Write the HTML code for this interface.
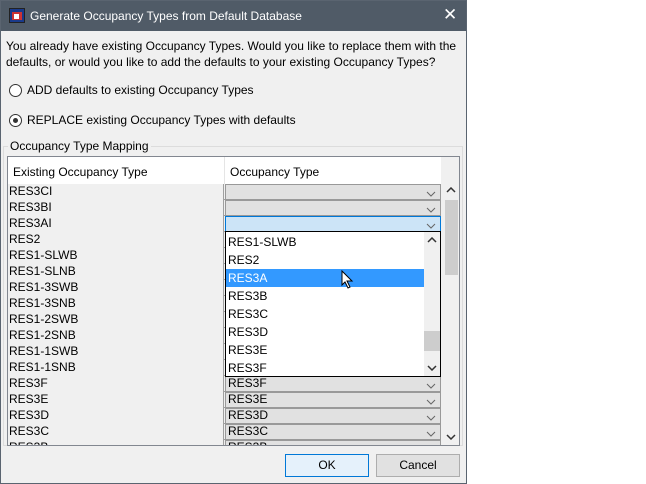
<!DOCTYPE html><html><head><style>
*{box-sizing:border-box}body{margin:0;width:646px;height:484px;background:#fff;font-family:"Liberation Sans",sans-serif;font-size:12px;color:#000;position:relative;overflow:hidden}
.dlg{position:absolute;left:0;top:0;width:467px;height:484px;background:#f0f0f0}
.bd{position:absolute;left:0;top:0;width:467px;height:484px;border:1px solid #5a6470;pointer-events:none}
.title{position:absolute;left:0;top:0;width:467px;height:31px;background:#505b67;color:#fff;font-size:12px}
.abs{position:absolute}
.row{position:absolute;left:0;height:16px;border-bottom:1px solid #a0a0a0;width:433px}
.c1{position:absolute;left:0;width:216px;height:16px;padding-left:1px;line-height:15px;background:#f0f0f0;border-right:1px solid #a0a0a0}
.c2{position:absolute;left:217px;width:216px;height:16px;background:#e1e1e1;border:1px solid #999;padding-left:2px;line-height:13px}
.c2 svg{position:absolute;right:4px;top:6px}
.it{position:absolute;left:0;width:198px;height:18px;line-height:18px;padding-left:2px;font-size:12px}
.btn{position:absolute;top:454px;width:84px;height:23px;border:1px solid #adadad;background:#e1e1e1;text-align:center;line-height:21px}
</style></head><body>
<div class="dlg">
<div class="title">
<div class="abs" style="left:9px;top:8px;width:16px;height:15px;background:#1a3a8a;border:1px solid #222"><div class="abs" style="left:2px;top:3px;width:10px;height:8px;background:#c33"></div><div class="abs" style="left:4px;top:5px;width:5px;height:5px;background:#fff"></div></div>
<div class="abs" style="left:30px;top:9px">Generate Occupancy Types from Default Database</div>
<div class="abs" style="left:443px;top:5px;font-size:17px">✕</div>
</div>
<div class="abs" style="left:6px;top:38px;line-height:16px">You already have existing Occupancy Types. Would you like to replace them with the<br>defaults, or would you like to add the defaults to your existing Occupancy Types?</div>
<div class="abs" style="left:9px;top:84px;width:13px;height:13px;border:1px solid #333;border-radius:50%;background:#fff"></div>
<div class="abs" style="left:27px;top:83px">ADD defaults to existing Occupancy Types</div>
<div class="abs" style="left:9px;top:114px;width:13px;height:13px;border:1px solid #333;border-radius:50%;background:#fff"><div class="abs" style="left:3px;top:3px;width:5px;height:5px;border-radius:50%;background:#333"></div></div>
<div class="abs" style="left:27px;top:113px">REPLACE existing Occupancy Types with defaults</div>
<div class="abs" style="left:3px;top:146px;width:460px;height:300px;border:1px solid #dcdcdc"></div>
<div class="abs" style="left:8px;top:139px;background:#f0f0f0;padding:0 2px">Occupancy Type Mapping</div>
<div class="abs" style="left:7px;top:156px;width:453px;height:290px;border:1px solid #828790;background:#f0f0f0;overflow:hidden">
<div class="abs" style="left:0;top:0;width:433px;height:27px;background:#fff"></div>
<div class="abs" style="left:216px;top:0;width:1px;height:27px;background:#e5e5e5"></div>
<div class="abs" style="left:5px;top:8px">Existing Occupancy Type</div>
<div class="abs" style="left:222px;top:8px">Occupancy Type</div>
<div id="rows"></div>
<div class="abs" style="left:434px;top:27px;width:18px;height:262px;background:#f0f0f0"></div>
<div class="abs" style="left:437px;top:43px;width:13px;height:75px;background:#cdcdcd"></div>
<svg class="abs" style="left:438px;top:30px" width="10" height="6"><path d="M1 5 L5 1 L9 5" fill="none" stroke="#333" stroke-width="1.5"/></svg>
<svg class="abs" style="left:438px;top:277px" width="10" height="6"><path d="M1 1 L5 5 L9 1" fill="none" stroke="#333" stroke-width="1.5"/></svg>
</div>
<div class="abs" style="left:225px;top:231px;width:216px;height:146px;border:1px solid #000;background:#fff">
<div class="it" style="top:1px">RES1-SLWB</div>
<div class="it" style="top:19px">RES2</div>
<div class="it" style="top:37px;background:#3399ff;color:#fff">RES3A</div>
<div class="it" style="top:55px">RES3B</div>
<div class="it" style="top:73px">RES3C</div>
<div class="it" style="top:91px">RES3D</div>
<div class="it" style="top:109px">RES3E</div>
<div class="it" style="top:127px">RES3F</div>
<div class="abs" style="left:198px;top:0;width:16px;height:144px;background:#f0f0f0"></div>
<div class="abs" style="left:198px;top:99px;width:16px;height:20px;background:#cdcdcd"></div>
<svg class="abs" style="left:201px;top:5px" width="10" height="6"><path d="M1 5 L5 1 L9 5" fill="none" stroke="#333" stroke-width="1.5"/></svg>
<svg class="abs" style="left:201px;top:133px" width="10" height="6"><path d="M1 1 L5 5 L9 1" fill="none" stroke="#333" stroke-width="1.5"/></svg>
<svg class="abs" style="left:115px;top:38px" width="14" height="20"><path d="M1 1 L1 15 L4 12 L7 18 L9 17 L6 11 L11 11 Z" fill="#fff" stroke="#000"/></svg>
</div>
<div class="btn" style="left:285px;border-color:#0078d7;background:#e5f1fb">OK</div>
<div class="btn" style="left:376px">Cancel</div>
<div class="bd"></div>
</div>
<script>
var n=["RES3CI","","RES3BI","","RES3AI","","RES2","","RES1-SLWB","","RES1-SLNB","","RES1-3SWB","","RES1-3SNB","","RES1-2SWB","","RES1-2SNB","","RES1-1SWB","","RES1-1SNB","","RES3F","RES3F","RES3E","RES3E","RES3D","RES3D","RES3C","RES3C","RES3B","RES3B"];
var h="";for(var i=0;i<n.length;i+=2){var t=27+(i/2)*16;var sel=i==4;
h+='<div class="row" style="top:'+t+'px"><div class="c1">'+n[i]+'</div><div class="c2" style="'+(sel?'background:#cce4f7;border-color:#0078d7':'')+'">'+n[i+1]+'<svg width="10" height="6"><path d="M1 1 L5 5 L9 1" fill="none" stroke="#666"/></svg></div></div>';}
document.getElementById("rows").innerHTML=h;
</script>
</body></html>
